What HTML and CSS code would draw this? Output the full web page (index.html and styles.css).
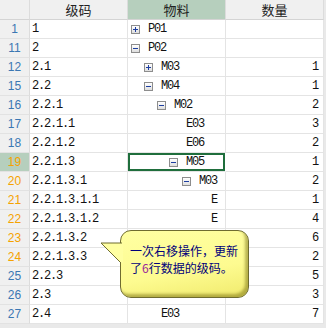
FILE: index.html
```html
<!DOCTYPE html>
<html>
<head>
<meta charset="utf-8">
<link rel="stylesheet" href="styles.css">
</head>
<body>
<div class="frame">
  <div class="grid">
    <div class="hd corner"></div>
    <div class="hd">级码</div>
    <div class="hd active">物料</div>
    <div class="hd">数量</div>

    <div class="rn">1</div><div class="c code">1</div><div class="c tree lv0"><span class="tg plus"></span>P01</div><div class="c qty"></div>
    <div class="rn">11</div><div class="c code">2</div><div class="c tree lv0"><span class="tg minus"></span>P02</div><div class="c qty"></div>
    <div class="rn">12</div><div class="c code">2.1</div><div class="c tree lv1"><span class="tg plus"></span>M03</div><div class="c qty">1</div>
    <div class="rn">15</div><div class="c code">2.2</div><div class="c tree lv1"><span class="tg minus"></span>M04</div><div class="c qty">1</div>
    <div class="rn">16</div><div class="c code">2.2.1</div><div class="c tree lv2"><span class="tg minus"></span>M02</div><div class="c qty">2</div>
    <div class="rn">17</div><div class="c code">2.2.1.1</div><div class="c tree lv3"><span class="tg leaf"></span>E03</div><div class="c qty">3</div>
    <div class="rn">18</div><div class="c code">2.2.1.2</div><div class="c tree lv3"><span class="tg leaf"></span>E06</div><div class="c qty">2</div>
    <div class="rn sel">19</div><div class="c code">2.2.1.3</div><div class="c tree lv3 cur"><span class="tg minus"></span>M05</div><div class="c qty">1</div>
    <div class="rn or">20</div><div class="c code">2.2.1.3.1</div><div class="c tree lv4"><span class="tg minus"></span>M03</div><div class="c qty">2</div>
    <div class="rn or">21</div><div class="c code">2.2.1.3.1.1</div><div class="c tree lv5"><span class="tg leaf"></span>E</div><div class="c qty">1</div>
    <div class="rn or">22</div><div class="c code">2.2.1.3.1.2</div><div class="c tree lv5"><span class="tg leaf"></span>E</div><div class="c qty">4</div>
    <div class="rn or">23</div><div class="c code">2.2.1.3.2</div><div class="c tree lv4"><span class="tg leaf"></span>E01</div><div class="c qty">6</div>
    <div class="rn or">24</div><div class="c code">2.2.1.3.3</div><div class="c tree lv4"><span class="tg leaf"></span>E02</div><div class="c qty">2</div>
    <div class="rn">25</div><div class="c code">2.2.3</div><div class="c tree lv2"><span class="tg leaf"></span>E05</div><div class="c qty">5</div>
    <div class="rn">26</div><div class="c code">2.3</div><div class="c tree lv1"><span class="tg leaf"></span>E02</div><div class="c qty">3</div>
    <div class="rn">27</div><div class="c code">2.4</div><div class="c tree lv1"><span class="tg leaf"></span>E03</div><div class="c qty">7</div>
  </div>

  <div class="tip">
    <svg class="tip-arrow" width="23" height="23" viewBox="0 0 23 23">
      <polygon points="1,1 23,1 23,21 21,21" fill="#ffffa2"/>
      <polyline points="22,1 1,1 21,21" fill="none" stroke="#6f6c30" stroke-width="1"/>
    </svg>
    一次右移操作，更新<br>了<span class="six">6</span>行数据的级码。
  </div>
</div>
</body>
</html>
```

FILE: styles.css
```css
html, body {
  margin: 0;
  padding: 0;
  background: #ebebeb;
}

.frame {
  position: relative;
  width: 326px;
  height: 328px;
  overflow: hidden;
  background: #e9e9e9;
}

.grid {
  display: grid;
  grid-template-columns: 30px 98px 98px 98px;
  grid-template-rows: 20px;
  grid-auto-rows: 19px;
  width: 324px;
  background: #fff;
}

.hd {
  box-sizing: border-box;
  background: #f0f0f0;
  border-right: 1px solid #dcdcdc;
  border-bottom: 1px solid #d4d4d4;
  font-family: "Noto Sans CJK SC", sans-serif;
  font-size: 13px;
  line-height: 19px;
  color: #222;
  text-align: center;
}

.hd.active {
  background: #b6cfbd;
}

.rn {
  box-sizing: border-box;
  background: #f0f0f0;
  border-right: 1px solid #dcdcdc;
  border-bottom: 1px solid #e2e2e2;
  font-family: "Liberation Sans", Arial, sans-serif;
  font-size: 12px;
  line-height: 18px;
  text-align: center;
  color: #3b77b3;
}

.rn.or {
  color: #f5a200;
}

.rn.sel {
  background: #b6cfbd;
  color: #f5a200;
}

.c {
  box-sizing: border-box;
  border-right: 1px solid #e4e4e4;
  border-bottom: 1px solid #e4e4e4;
  font-family: "Liberation Mono", "DejaVu Sans Mono", monospace;
  font-size: 12px;
  letter-spacing: -1.2px;
  line-height: 18px;
  color: #111;
  white-space: nowrap;
  overflow: hidden;
}

.code {
  padding-left: 2px;
}

.qty {
  text-align: right;
  padding-right: 5px;
}

.tree {
  display: flex;
  align-items: center;
}

.lv0 { padding-left: 3px; }
.lv1 { padding-left: 16px; }
.lv2 { padding-left: 29px; }
.lv3 { padding-left: 41px; }
.lv4 { padding-left: 54px; }
.lv5 { padding-left: 66px; }

.tree.cur {
  box-shadow: inset 0 0 0 2px #1f6e3c;
  border-right-color: transparent;
}

.tg {
  position: relative;
  flex: none;
  box-sizing: border-box;
  width: 9px;
  height: 9px;
  margin-right: 8px;
}

.tg.plus, .tg.minus {
  border: 1px solid #8d8d8d;
  background: linear-gradient(#ffffff, #dedede);
}

.tg.minus::before, .tg.plus::before {
  content: "";
  position: absolute;
  left: 1px;
  top: 3px;
  width: 5px;
  height: 1px;
  background: #1d3ea0;
}

.tg.plus::after {
  content: "";
  position: absolute;
  left: 3px;
  top: 1px;
  width: 1px;
  height: 5px;
  background: #1d3ea0;
}

.tip {
  position: absolute;
  left: 120px;
  top: 230px;
  width: 129px;
  height: 68px;
  box-sizing: border-box;
  padding: 11px 0 0 9px;
  border: 1px solid #6f6c30;
  border-radius: 11px;
  background: linear-gradient(170deg, #ffffa2 0%, #fdfb90 60%, #f0ea6c 100%);
  box-shadow: inset -3px -3px 3px rgba(100, 90, 0, 0.45);
  font-family: "Noto Sans CJK SC", sans-serif;
  font-size: 12px;
  line-height: 17px;
  color: #00007a;
  white-space: nowrap;
}

.tip-arrow {
  position: absolute;
  left: -21px;
  top: 11px;
}

.six {
  color: #9a2a9a;
}
```
